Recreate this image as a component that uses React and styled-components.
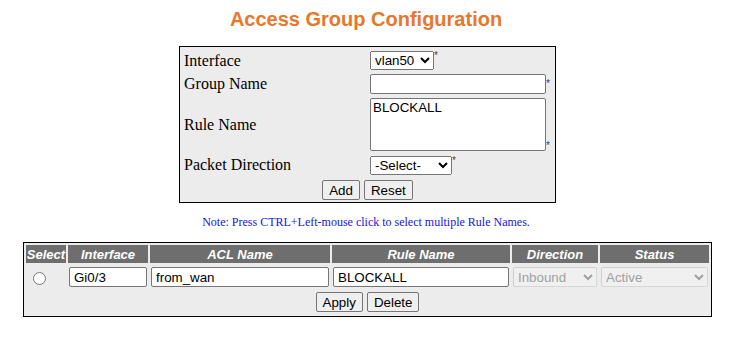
import React from "react";
import styled, { createGlobalStyle } from "styled-components";

const GlobalStyle = createGlobalStyle`
  body {
    margin: 8px;
    font-family: "Liberation Serif", "Times New Roman", serif;
    background: #fff;
  }
`;

const Title = styled.div`
  text-align: center;
  font-family: "Liberation Sans", Arial, sans-serif;
  font-size: 20px;
  font-weight: bold;
  line-height: 23px;
  color: #e8772c;
`;

const FormBox = styled.div`
  box-sizing: border-box;
  width: 377px;
  margin: 15px 0 0 171px;
  border: 1px solid #000;
  background: #ececec;
  padding: 4px 4px 2px 4px;
  display: grid;
  grid-template-columns: 186px 1fr;
  row-gap: 4px;
  align-items: center;
`;

const Label = styled.div`
  font-size: 16px;
  color: #000;
  line-height: 18px;
`;

const Field = styled.div`
  font-size: 0;
  line-height: 0;
  white-space: nowrap;
  margin-top: ${(p) => p.$top || 0}px;
`;

const Star = styled.span`
  font-family: "Liberation Sans", Arial, sans-serif;
  font-size: 10px;
  line-height: 10px;
  color: ${(p) => (p.$blue ? "#1c3c9c" : "#5a3a10")};
  vertical-align: ${(p) => p.$align || "top"};
`;

const Select = styled.select`
  font-family: "Liberation Sans", Arial, sans-serif;
  font-size: 13.33px;
  height: 19px;
  width: ${(p) => p.$w}px;
  vertical-align: top;
  margin: 0;
`;

const TextInput = styled.input`
  font-family: "Liberation Sans", Arial, sans-serif;
  font-size: 13.33px;
  height: 20px;
  width: ${(p) => (p.$w ? `${p.$w}px` : "100%")};
  box-sizing: border-box;
  margin: 0;
  padding: 1px 4px;
  border: 1px solid #767676;
  border-radius: 2px;
  vertical-align: middle;
`;

const TextArea = styled.textarea`
  font-family: "Liberation Sans", Arial, sans-serif;
  font-size: 13.33px;
  width: 176px;
  height: 53px;
  box-sizing: border-box;
  margin: 0;
  padding: 1px 2px;
  resize: none;
  overflow-y: scroll;
  border: 1px solid #767676;
  border-radius: 2px;
  vertical-align: bottom;
`;

const ButtonRow = styled.div`
  grid-column: 1 / -1;
  display: flex;
  justify-content: center;
  gap: 4px;
  margin-top: ${(p) => p.$top || 0}px;
`;

const Button = styled.button`
  font-family: "Liberation Sans", Arial, sans-serif;
  font-size: 13.33px;
  height: 20px;
  padding: 0 6px;
  margin: 0;
  border: 1px solid #767676;
  border-radius: 2px;
  background: #efefef;
  color: #000;
`;

const Note = styled.div`
  margin-top: 12px;
  text-align: center;
  font-size: 12px;
  line-height: 14px;
  color: #1515e0;
`;

const TableBox = styled.div`
  width: 687px;
  margin: 13px 0 0 15px;
  border: 1px solid #000;
  background: #ececec;
`;

const Grid = styled.table`
  width: 100%;
  table-layout: fixed;
  border-collapse: separate;
  border-spacing: 2px;
`;

const Head = styled.th`
  background: #6e6e6e;
  color: #fff;
  font-family: "Liberation Sans", Arial, sans-serif;
  font-size: 13px;
  font-weight: bold;
  font-style: italic;
  height: 18px;
  padding: 0;
  text-align: center;
  width: ${(p) => p.$w}px;
`;

const Cell = styled.td`
  padding: ${(p) => (p.$tight ? "0 1px 1px" : "1px")};
  height: 22px;
  text-align: ${(p) => (p.$center ? "center" : "left")};
`;

const Radio = styled.input`
  margin: 0 0 0 6px;
  width: 13px;
  height: 13px;
  vertical-align: middle;
`;

const FullSelect = styled.select`
  font-family: "Liberation Sans", Arial, sans-serif;
  font-size: 13.33px;
  width: 100%;
  height: 20px;
  margin: 0;
`;

const columns = [
  { name: "Select", w: 40 },
  { name: "Interface", w: 80 },
  { name: "ACL Name", w: 180 },
  { name: "Rule Name", w: 178 },
  { name: "Direction", w: 86 },
  { name: "Status", w: 109 },
];

export default function App() {
  return (
    <>
      <GlobalStyle />
      <Title>Access Group Configuration</Title>
      <FormBox>
        <Label>Interface</Label>
        <Field>
          <Select $w={64} defaultValue="vlan50">
            <option>vlan50</option>
          </Select>
          <Star>*</Star>
        </Field>
        <Label>Group Name</Label>
        <Field>
          <TextInput $w={176} />
          <Star $blue $align="middle">*</Star>
        </Field>
        <Label>Rule Name</Label>
        <Field>
          <TextArea defaultValue="BLOCKALL" />
          <Star $blue $align="bottom">*</Star>
        </Field>
        <Label>Packet Direction</Label>
        <Field $top={1}>
          <Select $w={82}>
            <option>-Select-</option>
          </Select>
          <Star>*</Star>
        </Field>
        <ButtonRow $top={1}>
          <Button>Add</Button>
          <Button>Reset</Button>
        </ButtonRow>
      </FormBox>
      <Note>Note: Press CTRL+Left-mouse click to select multiple Rule Names.</Note>
      <TableBox>
        <Grid>
          <thead>
            <tr>
              {columns.map((c) => (
                <Head key={c.name} $w={c.w}>{c.name}</Head>
              ))}
            </tr>
          </thead>
          <tbody>
            <tr>
              <Cell>
                <Radio type="radio" name="sel" />
              </Cell>
              <Cell><TextInput defaultValue="Gi0/3" /></Cell>
              <Cell><TextInput defaultValue="from_wan" /></Cell>
              <Cell><TextInput defaultValue="BLOCKALL" /></Cell>
              <Cell>
                <FullSelect disabled>
                  <option>Inbound</option>
                </FullSelect>
              </Cell>
              <Cell>
                <FullSelect disabled>
                  <option>Active</option>
                </FullSelect>
              </Cell>
            </tr>
            <tr>
              <Cell colSpan={6} $center $tight>
                <ButtonRow>
                  <Button>Apply</Button>
                  <Button>Delete</Button>
                </ButtonRow>
              </Cell>
            </tr>
          </tbody>
        </Grid>
      </TableBox>
    </>
  );
}
